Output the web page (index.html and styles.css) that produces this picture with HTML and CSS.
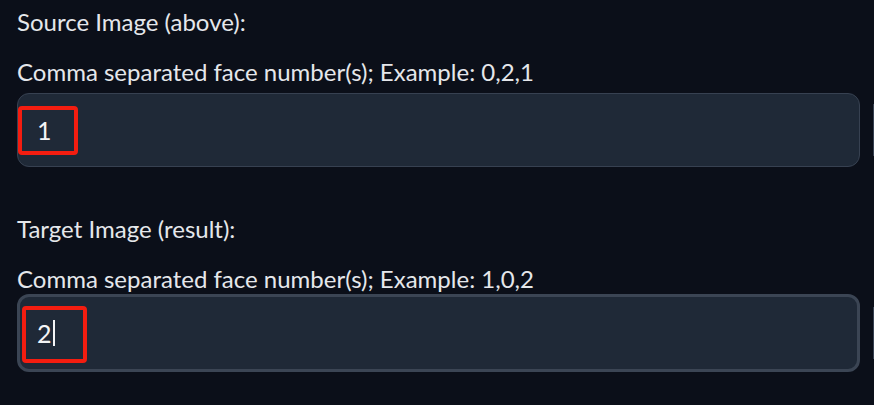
FILE: index.html
```html
<!DOCTYPE html>
<html>
<head>
<meta charset="utf-8">
<link rel="stylesheet" href="styles.css">
</head>
<body>
<div class="page">
  <section class="group">
    <div class="title">Source Image (above):</div>
    <label class="field">
      <span class="hint">Comma separated face number(s); Example: 0,2,1</span>
      <div class="row">
        <div class="box">
          <span class="value">1</span>
          <span class="mark mark-a"></span>
        </div>
        <div class="edge"></div>
      </div>
    </label>
  </section>
  <section class="group second">
    <div class="title">Target Image (result):</div>
    <label class="field">
      <span class="hint">Comma separated face number(s); Example: 1,0,2</span>
      <div class="row row-focused">
        <div class="box focused">
          <span class="value">2<span class="caret"></span></span>
          <span class="mark mark-b"></span>
        </div>
        <div class="edge"></div>
      </div>
    </label>
  </section>
</div>
</body>
</html>
```

FILE: styles.css
```css
html, body {
  margin: 0;
  padding: 0;
  background: #0b0f19;
}
body {
  width: 874px;
  height: 405px;
  overflow: hidden;
  font-family: "Lato", "Noto Sans", sans-serif;
  color: #e5e7eb;
}
.page {
  padding: 10px 0 0 17px;
  display: flex;
  flex-direction: column;
}
.group {
  display: flex;
  flex-direction: column;
}
.second {
  margin-top: 50px;
}
.title {
  font-size: 24px;
  line-height: 24px;
}
.field {
  display: flex;
  flex-direction: column;
  margin-top: 26px;
}
.hint {
  font-size: 24px;
  line-height: 24px;
}
.row {
  display: flex;
  align-items: center;
  gap: 13px;
  margin-top: 9px;
}
.row-focused {
  margin-top: 3px;
}
.box {
  position: relative;
  box-sizing: border-box;
  width: 843px;
  height: 74px;
  border: 1px solid #374151;
  border-radius: 12px;
  background: #1f2937;
  display: flex;
  align-items: center;
  padding-left: 19px;
}
.box.focused {
  height: 78px;
  border: 3px solid #3b4554;
  padding-left: 17px;
}
.value {
  font-size: 25px;
  color: #f3f4f6;
  display: inline-flex;
  align-items: center;
}
.caret {
  display: inline-block;
  width: 2px;
  height: 26px;
  background: #f3f4f6;
  margin-left: 1px;
}
.edge {
  width: 1px;
  height: 52px;
  background: #374151;
}
.mark {
  position: absolute;
  box-sizing: border-box;
  border: 4px solid #f41d10;
  border-radius: 4px;
}
.mark-a {
  left: 0px;
  top: 12px;
  width: 60px;
  height: 49px;
}
.mark-b {
  left: 2px;
  top: 9px;
  width: 65px;
  height: 57px;
}
```
